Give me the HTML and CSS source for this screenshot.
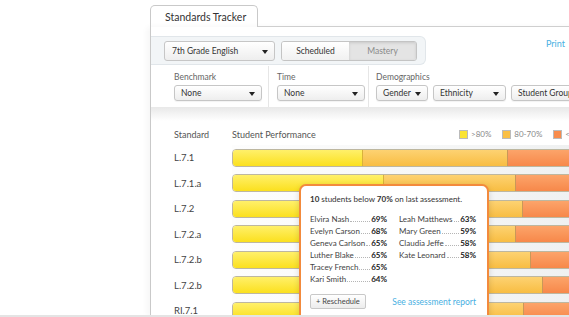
FILE: index.html
```html
<!DOCTYPE html>
<html lang="en">
<head>
    <meta charset="UTF-8">
    <title>Standards Tracker</title>
    <link rel="stylesheet" href="styles.css">
</head>
<body>
    <div class="page">
        <div class="tabs">
            <div class="tab">Standards Tracker</div>
            <div class="tab-rest"></div>
        </div>
        <div class="panel">
            <div class="toolbar">
                <div class="band">
                    <div class="select select-course">7th Grade English <span class="caret"></span></div>
                    <div class="segmented">
                        <div class="seg">Scheduled</div>
                        <div class="seg seg-active">Mastery</div>
                    </div>
                </div>
                <a class="print">Print</a>
            </div>

            <div class="filters">
                <div class="filter-group group-benchmark">
                    <div class="filter-label">Benchmark</div>
                    <div class="select select-small select-wide">None <span class="caret"></span></div>
                </div>
                <div class="filter-group group-time">
                    <div class="filter-label">Time</div>
                    <div class="select select-small select-wide">None <span class="caret"></span></div>
                </div>
                <div class="filter-group group-demo">
                    <div class="filter-label">Demographics</div>
                    <div class="filter-row">
                        <div class="select select-small select-gender">Gender <span class="caret"></span></div>
                        <div class="select select-small select-eth">Ethnicity <span class="caret"></span></div>
                        <div class="select select-small select-group">Student Group <span class="caret"></span></div>
                    </div>
                </div>
            </div>
            <div class="divider-shadow"></div>

            <div class="table-head">
                <div class="col-standard">Standard</div>
                <div class="col-perf">Student Performance</div>
                <div class="legend">
                    <span class="swatch sw-high"></span>&gt;80%
                    <span class="swatch sw-mid"></span>80-70%
                    <span class="swatch sw-low"></span>&lt;70%
                </div>
            </div>

            <div class="rows">
                <div class="row">
                    <div class="row-label">L.7.1</div>
                    <div class="track"><div class="bar">
                        <div class="seg-high" style="width:129px"></div>
                        <div class="seg-mid" style="width:144px"></div>
                        <div class="seg-low"></div>
                    </div></div>
                </div>
                <div class="row">
                    <div class="row-label">L.7.1.a</div>
                    <div class="track"><div class="bar">
                        <div class="seg-high" style="width:150px"></div>
                        <div class="seg-mid" style="width:131px"></div>
                        <div class="seg-low"></div>
                    </div></div>
                </div>
                <div class="row">
                    <div class="row-label">L.7.2</div>
                    <div class="track"><div class="bar">
                        <div class="seg-high" style="width:180px"></div>
                        <div class="seg-mid" style="width:108px"></div>
                        <div class="seg-low"></div>
                    </div></div>
                </div>
                <div class="row">
                    <div class="row-label">L.7.2.a</div>
                    <div class="track"><div class="bar">
                        <div class="seg-high" style="width:170px"></div>
                        <div class="seg-mid" style="width:111px"></div>
                        <div class="seg-low"></div>
                    </div></div>
                </div>
                <div class="row">
                    <div class="row-label">L.7.2.b</div>
                    <div class="track"><div class="bar">
                        <div class="seg-high" style="width:195px"></div>
                        <div class="seg-mid" style="width:101px"></div>
                        <div class="seg-low"></div>
                    </div></div>
                </div>
                <div class="row">
                    <div class="row-label">L.7.2.b</div>
                    <div class="track"><div class="bar">
                        <div class="seg-high" style="width:200px"></div>
                        <div class="seg-mid" style="width:108px"></div>
                        <div class="seg-low"></div>
                    </div></div>
                </div>
                <div class="row">
                    <div class="row-label">RI.7.1</div>
                    <div class="track"><div class="bar">
                        <div class="seg-high" style="width:180px"></div>
                        <div class="seg-mid" style="width:109px"></div>
                        <div class="seg-low"></div>
                    </div></div>
                </div>
            </div>
        </div>

        <div class="popup">
            <div class="popup-summary"><b>10</b> students below <b>70%</b> on last assessment.</div>
            <div class="popup-lists">
                <ul class="student-list">
                    <li><span class="name">Elvira Nash</span><span class="dots"></span><b>69%</b></li>
                    <li><span class="name">Evelyn Carson</span><span class="dots"></span><b>68%</b></li>
                    <li><span class="name">Geneva Carlson</span><span class="dots"></span><b>65%</b></li>
                    <li><span class="name">Luther Blake</span><span class="dots"></span><b>65%</b></li>
                    <li><span class="name">Tracey French</span><span class="dots"></span><b>65%</b></li>
                    <li><span class="name">Kari Smith</span><span class="dots"></span><b>64%</b></li>
                </ul>
                <ul class="student-list">
                    <li><span class="name">Leah Matthews</span><span class="dots"></span><b>63%</b></li>
                    <li><span class="name">Mary Green</span><span class="dots"></span><b>59%</b></li>
                    <li><span class="name">Claudia Jeffe</span><span class="dots"></span><b>58%</b></li>
                    <li><span class="name">Kate Leonard</span><span class="dots"></span><b>58%</b></li>
                </ul>
            </div>
            <div class="popup-footer">
                <div class="btn">+ Reschedule</div>
                <a class="report-link">See assessment report</a>
            </div>
        </div>
    </div>
    <div class="bottom-edge"></div>
</body>
</html>
```

FILE: styles.css
```css
body {
    margin: 0;
    width: 569px;
    height: 317px;
    overflow: hidden;
    background-color: #fff;
    font-family: Lato, 'Open Sans', sans-serif;
    color: #3a3a3a;
    position: relative;
}
.page {
    position: relative;
    padding: 5px 0 0 150px;
    width: 520px;
}
.tabs {
    display: flex;
    height: 22px;
}
.tab {
    width: 92px;
    padding-left: 14px;
    border: 1px solid #c9c9c9;
    border-bottom: none;
    border-radius: 5px 5px 0 0;
    line-height: 22px;
    font-size: 10.5px;
    color: #333;
}
.tab-rest {
    flex-grow: 1;
    border-bottom: 1px solid #cfcfcf;
}
.panel {
    border-left: 1px solid #c9c9c9;
    height: 290px;
    box-shadow: -3px 0 6px rgba(0,0,0,0.04);
}
.toolbar {
    display: flex;
    align-items: flex-start;
    padding-top: 9px;
}
.band {
    display: flex;
    align-items: center;
    gap: 6px;
    width: 261px;
    height: 27px;
    padding-left: 13px;
    background-color: #f2f5f7;
    border: 1px solid #e1e6ea;
    border-left: none;
    border-radius: 0 6px 6px 0;
}
.select {
    position: relative;
    box-sizing: border-box;
    border: 1px solid #c6c6c6;
    border-radius: 3px;
    background: linear-gradient(#ffffff, #eeeeee);
    color: #333;
}
.select-course {
    width: 111px;
    height: 20px;
    line-height: 18px;
    padding-left: 7px;
    font-size: 8.5px;
}
.caret {
    position: absolute;
    right: 6px;
    top: 50%;
    margin-top: -1px;
    border-width: 4px 3.5px 0 3.5px;
    border-style: solid;
    border-color: #222 transparent transparent transparent;
}
.segmented {
    display: flex;
    width: 136px;
    height: 20px;
    box-sizing: border-box;
    border: 1px solid #c4c4c4;
    border-radius: 3px;
    overflow: hidden;
    font-size: 8.5px;
}
.seg {
    flex: 1;
    text-align: center;
    line-height: 18px;
    background: linear-gradient(#ffffff, #f1f1f1);
    color: #333;
}
.seg-active {
    background: #e4e4e4;
    color: #8a8a8a;
    box-shadow: inset 0 1px 3px rgba(0,0,0,0.12);
}
.print {
    margin-left: 120px;
    margin-top: 2px;
    font-size: 9px;
    color: #48b0e2;
}
.filters {
    display: flex;
    height: 41px;
    margin-top: 1px;
}
.filter-group {
    box-sizing: border-box;
    padding-top: 5px;
}
.group-benchmark {
    width: 118px;
    padding-left: 23px;
    border-right: 1px solid #e6e6e6;
}
.group-time {
    width: 100px;
    padding-left: 8px;
    border-right: 1px solid #e6e6e6;
}
.group-demo {
    padding-left: 7px;
}
.filter-label {
    height: 13px;
    line-height: 13px;
    margin-bottom: 1px;
    font-size: 8.5px;
    color: #666;
}
.filter-row {
    display: flex;
    gap: 5px;
}
.select-small {
    height: 16px;
    line-height: 14px;
    padding-left: 6px;
    font-size: 8.5px;
    box-shadow: 0 1px 1px rgba(0,0,0,0.05);
}
.select-wide {
    width: 88px;
}
.select-gender {
    width: 52px;
}
.select-eth {
    width: 73px;
}
.select-group {
    width: 80px;
}
.divider-shadow {
    height: 14px;
    background: linear-gradient(#e8e8e8, #ffffff);
}
.table-head {
    display: flex;
    align-items: center;
    height: 22px;
    margin-top: 2px;
    font-size: 9px;
    color: #555;
}
.col-standard {
    width: 58px;
    padding-left: 23px;
}
.col-perf {
    width: 227px;
}
.legend {
    display: flex;
    align-items: center;
    font-size: 8px;
    color: #888;
    white-space: nowrap;
}
.swatch {
    display: inline-block;
    width: 7px;
    height: 7px;
    border: 1px solid #bbb;
    margin-right: 3px;
}
.sw-mid, .sw-low {
    margin-left: 11px;
}
.sw-high {
    background-color: #fbe433;
}
.sw-mid {
    background-color: #f9bf45;
}
.sw-low {
    background-color: #f88c4c;
}
.row {
    display: flex;
    align-items: center;
    height: 25.5px;
}
.row-label {
    width: 58px;
    padding-left: 23px;
    font-size: 9.5px;
    color: #444;
}
.track {
    flex-grow: 1;
    height: 25.5px;
    display: flex;
    align-items: center;
    background: linear-gradient(90deg, #fdfdfd 0%, #f5f6f6 50%, #eaeced 100%);
}
.bar {
    display: flex;
    width: 400px;
    height: 18px;
    box-sizing: border-box;
    border: 1px solid #bdb7a0;
    border-radius: 4px;
    overflow: hidden;
}
.seg-high {
    background: linear-gradient(#fff06a, #fbe01e);
    border-right: 1px solid #d9b23a;
}
.seg-mid {
    background: linear-gradient(#fdd272, #f8bd42);
    border-right: 1px solid #c99858;
}
.seg-low {
    flex-grow: 1;
    background: linear-gradient(#fca46a, #f7884a);
}
.popup {
    position: absolute;
    left: 299px;
    top: 184px;
    width: 190px;
    height: 140px;
    padding: 0 0 0 9px;
    box-sizing: border-box;
    background-color: #fff;
    border: 2px solid #f38a3c;
    border-radius: 7px;
    box-shadow: 0 2px 6px rgba(0,0,0,0.15);
    font-size: 8px;
    color: #333;
}
.popup-summary {
    margin-top: 7px;
    line-height: 12px;
}
.popup-lists {
    display: flex;
    gap: 12px;
    margin-top: 8px;
}
.student-list {
    list-style: none;
    margin: 0;
    padding: 0;
    width: 77px;
}
.student-list li {
    display: flex;
    align-items: baseline;
    height: 12px;
    line-height: 12px;
    white-space: nowrap;
}
.student-list .name {
    color: #444;
}
.dots {
    flex-grow: 1;
    margin: 0 1px;
    border-bottom: 1px dotted #b5b5b5;
}
.student-list b {
    color: #222;
}
.popup-footer {
    display: flex;
    align-items: center;
    justify-content: space-between;
    width: 166px;
    margin-top: 9px;
}
.btn {
    height: 13px;
    line-height: 13px;
    padding: 0 5px;
    border: 1px solid #c8c8c8;
    border-radius: 2px;
    background: linear-gradient(#ffffff, #ececec);
    font-size: 7.5px;
    color: #444;
}
.report-link {
    margin-top: 1px;
    font-size: 8.5px;
    color: #48b0e2;
}
.bottom-edge {
    position: absolute;
    left: 0;
    right: 0;
    bottom: 0;
    height: 2px;
    background-color: #e4e4e4;
}
```
